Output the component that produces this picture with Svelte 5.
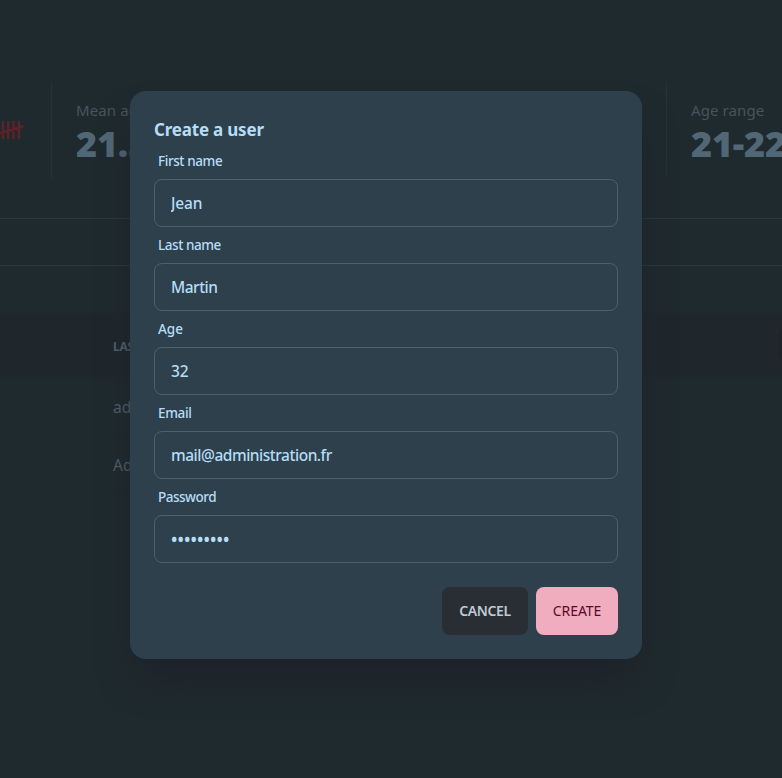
<script>
  const fields = [
    { id: 'first', label: 'First name', type: 'text', value: 'Jean', ls: -0.42, vs: -0.15 },
    { id: 'last', label: 'Last name', type: 'text', value: 'Martin', ls: -0.45, vs: -0.5 },
    { id: 'age', label: 'Age', type: 'text', value: '32', ls: 0, vs: -0.2 },
    { id: 'email', label: 'Email', type: 'text', value: 'mail@administration.fr', ls: -0.35, vs: -0.48 },
    { id: 'password', label: 'Password', type: 'text', value: '•••••••••', ls: -0.5, vs: 0.1 }
  ];
  const columns = ['', 'LAST NAME', 'FIRST NAME', ''];
  const rows = [
    ['', 'admin', 'admin', ''],
    ['', 'Adrien', 'Martin', '']
  ];
</script>

<div class="screen">
  <main class="page">
    <section class="stats">
      <div class="stat icon">
        <svg width="25" height="24" viewBox="0 0 25 24" fill="none" stroke="#5e2228" stroke-width="2.5" stroke-linecap="round">
          <path d="M3 4v16M8.200 4v16M13.500 4v16M19 4v16M-1 15.500l23.500-7" />
        </svg>
      </div>
      <div class="stat mean">
        <div class="name">Mean age</div>
        <div class="value">21.5</div>
      </div>
      <div class="stat range">
        <div class="name">Age range</div>
        <div class="value">21-22</div>
      </div>
    </section>
    <div class="band"></div>
    <div class="table">
      <div class="row head">
        {#each columns as c}<span>{c}</span>{/each}
        <i class="chip"></i>
      </div>
      {#each rows as row}
        <div class="row">
          {#each row as cell}<span>{cell}</span>{/each}
        </div>
      {/each}
    </div>
  </main>

  <div class="overlay">
    <form class="modal">
      <h3>Create a user</h3>
      {#each fields as f}
        <label for={f.id} style="letter-spacing: {f.ls}px">{f.label}</label>
        <input id={f.id} class:dots={f.id === 'password'} type={f.type} value={f.value} style="letter-spacing: {f.vs}px" />
      {/each}
      <div class="actions">
        <button type="button" class="cancel">CANCEL</button>
        <button type="button" class="create">CREATE</button>
      </div>
    </form>
  </div>
</div>

<style>
  :global(body) { background: #1f2a2f; }
  .screen, .screen * { box-sizing: border-box; }
  .screen {
    position: relative;
    width: 782px;
    height: 778px;
    overflow: hidden;
    background: #1f2a2f;
    font-family: "Noto Sans", "Open Sans", sans-serif;
  }
  .page { display: flex; flex-direction: column; padding-top: 82px; }
  .stats { display: flex; height: 96px; }
  .stat { flex: none; padding: 16px 24px; border-right: 1px solid #263238; }
  .stat.icon { width: 52px; padding: 36px 0 0; }
  .stat.icon svg { display: block; }
  .stat.mean { width: 615px; }
  .stat.range { border-right: 0; width: 240px; }
  .name { font-size: 15px; line-height: 24px; color: #46545d; letter-spacing: 0.1px; }
  .value { font-size: 36px; line-height: 40px; font-weight: 900; color: #526775; letter-spacing: -0.2px; margin-top: 2px; }
  .band { margin-top: 40px; height: 48px; border-top: 1px solid #2b383e; border-bottom: 1px solid #2b383e; }
  .table { margin-top: 47px; }
  .row { position: relative; display: grid; grid-template-columns: 97px 300px 300px 85px; align-items: center; height: 58px; padding-top: 2px; color: #50616b; font-size: 15.5px; border-bottom: 1px solid #1e292e; }
  .row span { padding-left: 16px; }
  .row.head { height: 64px; background: #1f272d; font-size: 12px; font-weight: 700; border-bottom: 0; letter-spacing: -0.3px; }
  .chip { position: absolute; right: -24px; top: 16px; width: 28px; height: 32px; border-radius: 8px; background: #1e2327; }
  .overlay { position: absolute; inset: 0; display: flex; justify-content: center; align-items: flex-start; padding-top: 91px; padding-right: 10px; }
  .modal {
    display: flex;
    flex-direction: column;
    width: 512px;
    height: 568px;
    padding: 24px;
    border-radius: 16px;
    background: #2e404b;
    box-shadow: 0 25px 40px -12px rgba(28, 31, 40, 0.95);
    color: #b5ddf7;
  }
  h3 { margin: 0; padding-top: 1px; height: 28px; font-size: 17px; line-height: 28px; font-weight: 700; letter-spacing: -0.2px; }
  label { height: 36px; padding: 8px 4px; font-size: 13.5px; line-height: 21px; font-weight: 500; }
  input {
    width: 100%;
    height: 48px;
    padding: 0 16px 1px;
    border: 1px solid #4b616d;
    border-radius: 8px;
    outline: 0;
    background: transparent;
    color: #b5ddf7;
    font-family: inherit;
    font-size: 15.5px;
    font-weight: 500;
  }
  .dots { padding: 1px 16px 0; font-size: 17px; font-weight: 600; }
  .actions { display: flex; justify-content: flex-end; gap: 8px; margin-top: 24px; }
  button { height: 48px; padding: 0 0 1px; border: 0; border-radius: 8px; font-family: inherit; font-size: 14px; font-weight: 600; }
  .cancel { width: 86px; background: #282e34; color: #bfcad4; letter-spacing: -0.4px; }
  .create { width: 82px; background: #f0adc0; color: #5a0a28; letter-spacing: -0.1px; font-weight: 400; }
</style>
